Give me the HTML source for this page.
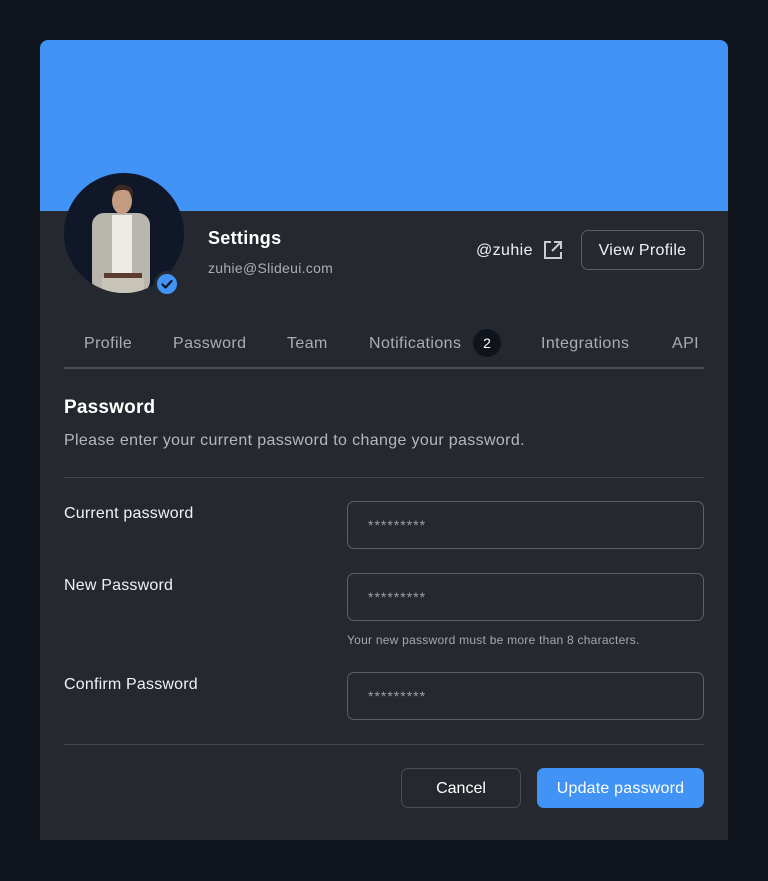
<!DOCTYPE html>
<html><head><style>
*{margin:0;padding:0;box-sizing:border-box}
body{width:768px;height:881px;background:#10151d;font-family:"Liberation Sans",sans-serif;position:relative;overflow:hidden;color:#fff}
.card{position:absolute;left:40px;top:40px;width:688px;height:800px;background:#25292f;border-radius:8px 8px 0 0;overflow:hidden}
.banner{position:absolute;left:0;top:0;width:688px;height:171px;background:#4193f6}
.abs{position:absolute}
.inp{position:absolute;left:307px;width:357px;height:48px;border:1px solid #5b6068;border-radius:7px;color:#9aa0a8;font-size:14px;padding:15px 0 0 20px;letter-spacing:1px}
.lbl{position:absolute;left:24px;font-size:16px;color:#f0f2f4;letter-spacing:0.2px}
.tab{position:absolute;top:295px;font-size:16px;color:#a9aeb5;letter-spacing:0.4px}
</style></head><body>
<div class="card">
<div class="banner"></div>
<div class="abs" style="left:24px;top:133px;width:120px;height:120px;border-radius:50%;background:#0f1728;overflow:hidden">
<svg width="120" height="120" viewBox="0 0 120 120">
<rect x="28" y="40" width="58" height="80" rx="12" fill="#b9b6ad"/>
<rect x="48" y="42" width="20" height="62" fill="#ecebe6"/>
<rect x="40" y="100" width="38" height="5" fill="#5a3b2e"/>
<rect x="38" y="105" width="42" height="20" fill="#c8c4b8"/>
<ellipse cx="58" cy="28" rx="10" ry="13" fill="#c49a80"/>
<path d="M47 24 Q50 10 60 12 Q70 13 69 24 Q66 16 58 17 Q50 17 47 24Z" fill="#3a2a20"/>
</svg>
</div>
<div class="abs" style="left:114px;top:231px;width:26px;height:26px;border-radius:50%;background:#4193f6;border:3px solid #25292f">
<svg width="20" height="20" viewBox="0 0 20 20"><path d="M5.5 10.5l3 3 6-6.5" stroke="#10151d" stroke-width="2.2" fill="none" stroke-linecap="round" stroke-linejoin="round"/></svg>
</div>
<div class="abs" style="left:168px;top:188px;font-size:18px;font-weight:bold;letter-spacing:0.3px">Settings</div>
<div class="abs" style="left:168px;top:220px;font-size:14px;color:#a9aeb5;letter-spacing:0.3px">zuhie@Slideui.com</div>
<div class="abs" style="left:436px;top:202px;font-size:16px;color:#eef0f2;letter-spacing:0.4px">@zuhie</div>
<svg class="abs" style="left:502px;top:199px" width="22" height="22" viewBox="0 0 22 22"><path d="M9 3H3v16h16v-6" stroke="#c9ccd1" stroke-width="2" fill="none"/><path d="M12 3h7v7M19 3l-9 9" stroke="#c9ccd1" stroke-width="2" fill="none"/></svg>
<div class="abs" style="left:541px;top:190px;width:123px;height:40px;border:1px solid #5b6068;border-radius:7px;font-size:16px;text-align:center;line-height:40px;color:#f0f2f4;letter-spacing:0.3px">View Profile</div>
<div class="tab" style="left:44px">Profile</div>
<div class="tab" style="left:133px">Password</div>
<div class="tab" style="left:247px">Team</div>
<div class="tab" style="left:329px">Notifications</div>
<div class="abs" style="left:433px;top:289px;width:28px;height:28px;border-radius:50%;background:#0f141c;font-size:14px;text-align:center;line-height:28px">2</div>
<div class="tab" style="left:501px">Integrations</div>
<div class="tab" style="left:632px">API</div>
<div class="abs" style="left:24px;top:327px;width:640px;height:2px;background:#4a4f57"></div>
<div class="abs" style="left:24px;top:357px;font-size:19px;font-weight:bold;letter-spacing:0.2px">Password</div>
<div class="abs" style="left:24px;top:392px;font-size:16px;color:#b3b8bf;letter-spacing:0.35px">Please enter your current password to change your password.</div>
<div class="abs" style="left:24px;top:437px;width:640px;height:1px;background:#40454d"></div>
<div class="lbl" style="top:465px">Current password</div>
<div class="inp" style="top:461px">*********</div>
<div class="lbl" style="top:537px">New Password</div>
<div class="inp" style="top:533px">*********</div>
<div class="abs" style="left:307px;top:593px;font-size:12px;color:#a3a8af;letter-spacing:0.25px">Your new password must be more than 8 characters.</div>
<div class="lbl" style="top:636px">Confirm Password</div>
<div class="inp" style="top:632px">*********</div>
<div class="abs" style="left:24px;top:704px;width:640px;height:1px;background:#40454d"></div>
<div class="abs" style="left:361px;top:728px;width:120px;height:40px;border:1px solid #4a4f57;border-radius:7px;text-align:center;line-height:40px;font-size:16px">Cancel</div>
<div class="abs" style="left:497px;top:728px;width:167px;height:40px;background:#4193f6;border-radius:7px;text-align:center;line-height:41px;font-size:16px;letter-spacing:0.2px">Update password</div>
</div>
</body></html>
